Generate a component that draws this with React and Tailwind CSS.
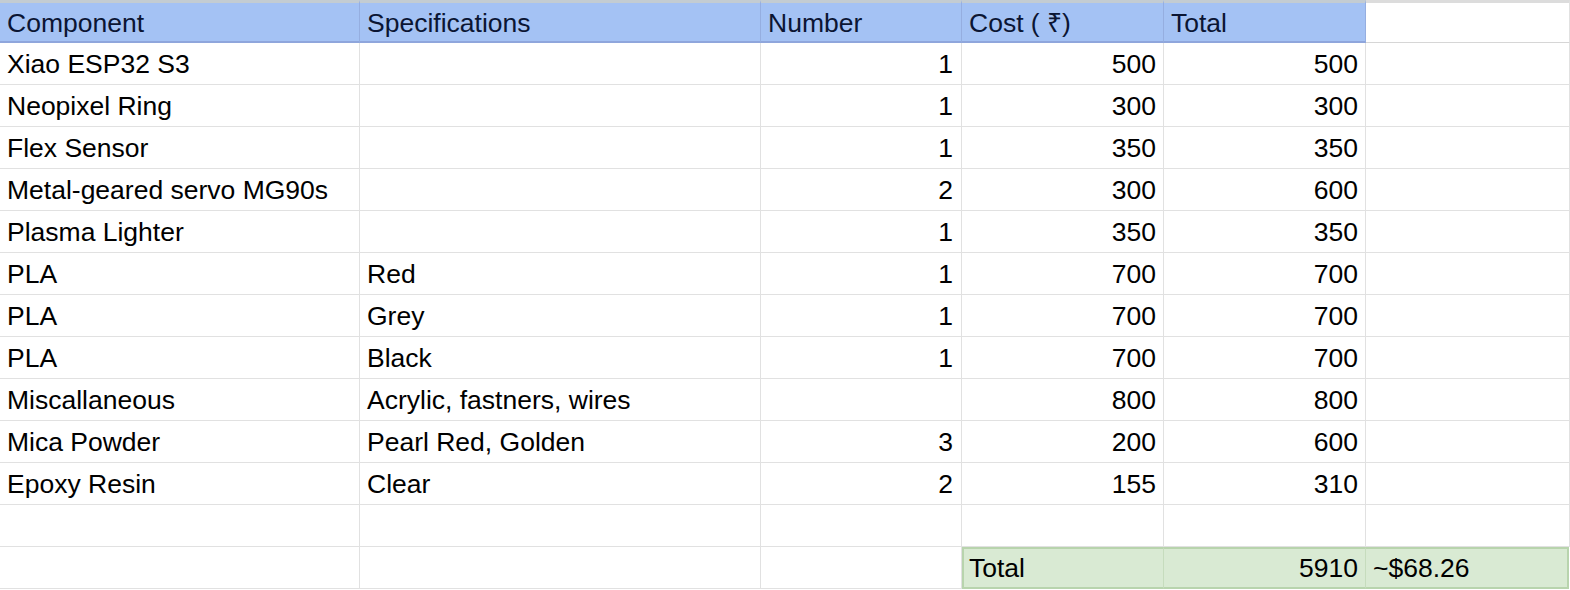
import React from 'react';

const rows = [
    ['Xiao ESP32 S3', '', '1', '500', '500'],
    ['Neopixel Ring', '', '1', '300', '300'],
    ['Flex Sensor', '', '1', '350', '350'],
    ['Metal-geared servo MG90s', '', '2', '300', '600'],
    ['Plasma Lighter', '', '1', '350', '350'],
    ['PLA', 'Red', '1', '700', '700'],
    ['PLA', 'Grey', '1', '700', '700'],
    ['PLA', 'Black', '1', '700', '700'],
    ['Miscallaneous', 'Acrylic, fastners, wires', '', '800', '800'],
    ['Mica Powder', 'Pearl Red, Golden', '3', '200', '600'],
    ['Epoxy Resin', 'Clear', '2', '155', '310'],
];

const headers = ['Component', 'Specifications', 'Number', 'Cost ( ₹)', 'Total'];

const cell = 'h-[42px] flex items-center pt-[1px] border-r border-b border-[#e1e1e1] overflow-hidden whitespace-nowrap';

const App = () => {
    return (
        <div className="w-[1570px] h-[590px] bg-white text-black text-[26.5px] leading-none" style={{ fontFamily: '"Liberation Sans", Arial, sans-serif' }}>
            <div className="grid grid-cols-[360px_401px_201px_202px_202px_204px] w-[1570px]">
                {/* header */}
                {headers.map((h, i) => (
                    <div key={h} className="h-[43px] flex items-center pl-[7px] pt-[2px] bg-[#a4c2f4] text-[#0b1533] border-t-[3px] border-t-[#c3ccd2] border-r border-r-[#95aee0] border-b-2 border-b-[#8fa6dc]">{h}</div>
                ))}
                <div className="h-[43px] border-t-[3px] border-t-[#dcdcdc] border-r border-r-[#e1e1e1] border-b border-b-[#d6d6d6]"></div>

                {/* body */}
                {rows.map((r, idx) => (
                    <React.Fragment key={idx}>
                        <div className={`${cell} pl-[7px]`}>{r[0]}</div>
                        <div className={`${cell} pl-[7px]`}>{r[1]}</div>
                        <div className={`${cell} justify-end pr-[8px]`}>{r[2]}</div>
                        <div className={`${cell} justify-end pr-[7px]`}>{r[3]}</div>
                        <div className={`${cell} justify-end pr-[7px]`}>{r[4]}</div>
                        <div className={cell}></div>
                    </React.Fragment>
                ))}

                {/* empty row */}
                <div className={cell}></div>
                <div className={cell}></div>
                <div className={cell}></div>
                <div className={cell}></div>
                <div className={cell}></div>
                <div className={cell}></div>

                {/* total row */}
                <div className={cell}></div>
                <div className={cell}></div>
                <div className={cell}></div>
                <div className="h-[42px] flex items-center pt-[1px] pl-[5px] bg-[#d9ead3] border-y-2 border-[#b8d4ad] border-l-2 border-r border-r-[#c6dcbd]">Total</div>
                <div className="h-[42px] flex items-center pt-[1px] justify-end pr-[7px] bg-[#d9ead3] border-y-2 border-[#b8d4ad] border-r border-r-[#c6dcbd]">5910</div>
                <div className="h-[42px] flex items-center pt-[1px] pl-[7px] bg-[#d9ead3] border-y-2 border-[#b8d4ad] border-r-2 w-[203px]">~$68.26</div>
            </div>
        </div>
    );
};

export default App;
